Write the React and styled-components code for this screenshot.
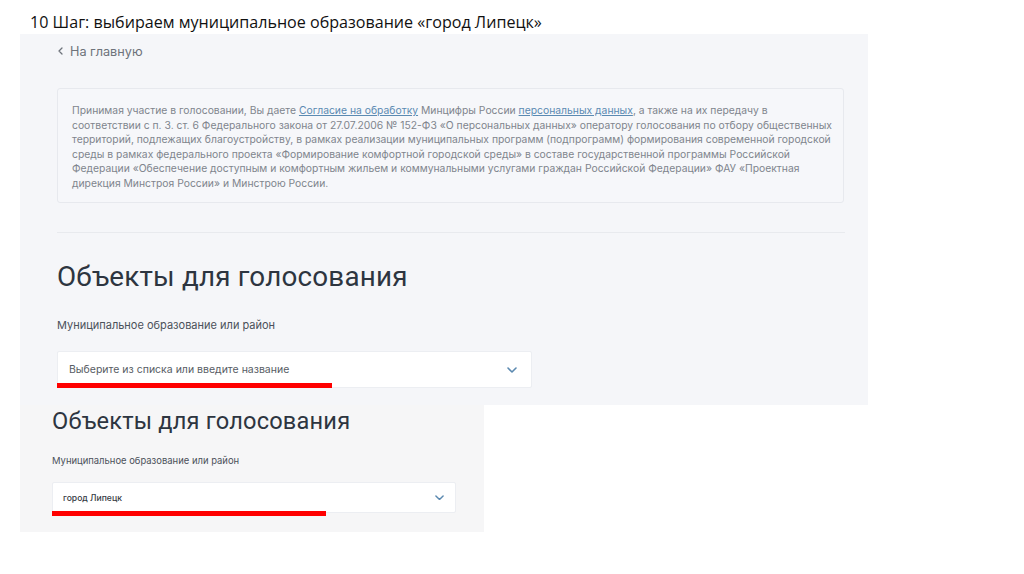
import styled, { createGlobalStyle } from 'styled-components';

const GlobalStyle = createGlobalStyle`
  html, body {
    margin: 0;
    padding: 0;
    background: #ffffff;
  }
  body {
    font-family: Inter, 'Noto Sans', sans-serif;
  }
`;

// sizes for the big screenshot and the smaller second one
const sizes = {
  lg: {
    heading: 27.8,
    headingLine: 34,
    headingTop: 27,
    label: 11,
    labelLine: 16,
    labelTop: 23,
    selectTop: 18,
    selectHeight: 37,
    selectPad: 11,
    selectRight: 14,
    value: 10.5,
    valueWeight: 400,
    red: 275,
    redTop: 31,
  },
  sm: {
    heading: 23.6,
    headingLine: 28,
    headingTop: 2,
    label: 9.45,
    labelLine: 14,
    labelTop: 19,
    selectTop: 14,
    selectHeight: 31,
    selectPad: 10,
    selectRight: 11,
    value: 8.6,
    valueWeight: 500,
    red: 274,
    redTop: 28,
  },
};

const Page = styled.div`
  width: 1024px;
  height: 574px;
  overflow: hidden;
`;

const SlideTitle = styled.h1`
  margin: 0;
  padding: 11px 0 0 30px;
  font-family: 'Open Sans', 'Noto Sans', sans-serif;
  font-weight: 400;
  font-size: 16.1px;
  line-height: 23px;
  color: #111111;
`;

const Shot = styled.div`
  display: flow-root;
  margin-left: 20px;
  box-sizing: border-box;
  width: ${(p) => p.$width}px;
  height: ${(p) => p.$height}px;
  padding-left: ${(p) => p.$padLeft}px;
  padding-right: ${(p) => p.$padRight}px;
  background: ${(p) => p.$bg};
`;

const BackLink = styled.a`
  display: flex;
  align-items: center;
  gap: 7px;
  margin-top: 9px;
  height: 16px;
  font-size: 12.7px;
  color: #6e737b;
  text-decoration: none;

  svg {
    margin-left: 1px;
  }
`;

const Notice = styled.div`
  margin-top: 29px;
  box-sizing: border-box;
  height: 115px;
  margin-right: 1px;
  padding: 14px 14px;
  border: 1px solid #e7e9ee;
  border-radius: 3px;
  background: #f6f7fa;
  font-size: 10.35px;
  line-height: 14.6px;
  color: #80858d;

  span.line {
    display: block;
    white-space: nowrap;
  }

  a {
    color: #5b8ab2;
    text-decoration: underline;
    text-underline-offset: 1px;
  }
`;

const Divider = styled.hr`
  margin: 29px 0 0;
  border: 0;
  height: 1px;
  background: #e8eaee;
`;

const Heading = styled.h2`
  margin: ${(p) => sizes[p.$size].headingTop}px 0 0;
  font-weight: 400;
  font-family: Roboto, Inter, sans-serif;
  font-size: ${(p) => sizes[p.$size].heading}px;
  line-height: ${(p) => sizes[p.$size].headingLine}px;
  color: #2d3540;
  letter-spacing: 0.2px;
`;

const FieldLabel = styled.div`
  margin-top: ${(p) => sizes[p.$size].labelTop}px;
  font-size: ${(p) => sizes[p.$size].label}px;
  line-height: ${(p) => sizes[p.$size].labelLine}px;
  color: #4b515a;
`;

const SelectBox = styled.div`
  position: relative;
  margin-top: ${(p) => sizes[p.$size].selectTop}px;
  box-sizing: border-box;
  width: ${(p) => p.$width}px;
  height: ${(p) => sizes[p.$size].selectHeight}px;
  display: flex;
  align-items: center;
  justify-content: space-between;
  padding: 0 ${(p) => sizes[p.$size].selectRight}px 0 ${(p) => sizes[p.$size].selectPad}px;
  background: #ffffff;
  border: 1px solid #eceef2;
  border-radius: 2px;
`;

const SelectValue = styled.span`
  font-size: ${(p) => sizes[p.$size].value}px;
  font-weight: ${(p) => sizes[p.$size].valueWeight};
  color: ${(p) => (p.$filled ? '#363b44' : '#575c64')};
`;

const RedMark = styled.div`
  position: absolute;
  left: -1px;
  top: ${(p) => sizes[p.$size].redTop}px;
  width: ${(p) => sizes[p.$size].red}px;
  height: 5px;
  background: #ff0000;
`;

function Chevron({ size = 10 }) {
  return (
    <svg width={size} height={size * 0.6} viewBox="0 0 10 6" fill="none">
      <path d="M1 1l4 4 4-4" stroke="#5b89b0" strokeWidth="1.6" strokeLinecap="round" strokeLinejoin="round" />
    </svg>
  );
}

function VotingField({ size, width, value, filled }) {
  return (
    <>
      <Heading $size={size}>Объекты для голосования</Heading>
      <FieldLabel $size={size}>Муниципальное образование или район</FieldLabel>
      <SelectBox $size={size} $width={width}>
        <SelectValue $size={size} $filled={filled}>{value}</SelectValue>
        <Chevron size={size === 'lg' ? 10 : 9} />
        <RedMark $size={size} />
      </SelectBox>
    </>
  );
}

export default function App() {
  return (
    <Page>
      <GlobalStyle />
      <SlideTitle>10 Шаг: выбираем муниципальное образование «город Липецк»</SlideTitle>

      <Shot $width={848} $height={371} $padLeft={37} $padRight={23} $bg="#f5f6f9">
        <BackLink href="#">
          <svg width="5" height="8" viewBox="0 0 5 8" fill="none">
            <path d="M4 1L1 4l3 3" stroke="#6e737b" strokeWidth="1.3" strokeLinecap="round" strokeLinejoin="round" />
          </svg>
          На главную
        </BackLink>
        <Notice>
          <span className="line">
            Принимая участие в голосовании, Вы даете <a href="#">Согласие на обработку</a> Минцифры России{' '}
            <a href="#">персональных данных</a>, а также на их передачу в
          </span>
          <span className="line">
            соответствии с п. 3. ст. 6 Федерального закона от 27.07.2006 № 152-ФЗ «О персональных данных» оператору голосования по отбору общественных
          </span>
          <span className="line">
            территорий, подлежащих благоустройству, в рамках реализации муниципальных программ (подпрограмм) формирования современной городской
          </span>
          <span className="line">
            среды в рамках федерального проекта «Формирование комфортной городской среды» в составе государственной программы Российской
          </span>
          <span className="line">
            Федерации «Обеспечение доступным и комфортным жильем и коммунальными услугами граждан Российской Федерации» ФАУ «Проектная
          </span>
          <span className="line">дирекция Минстроя России» и Минстрою России.</span>
        </Notice>
        <Divider />
        <VotingField size="lg" width={475} value="Выберите из списка или введите название" />
      </Shot>

      <Shot $width={464} $height={127} $padLeft={32} $padRight={0} $bg="#f6f6f7">
        <VotingField size="sm" width={404} value="город Липецк" filled />
      </Shot>
    </Page>
  );
}
